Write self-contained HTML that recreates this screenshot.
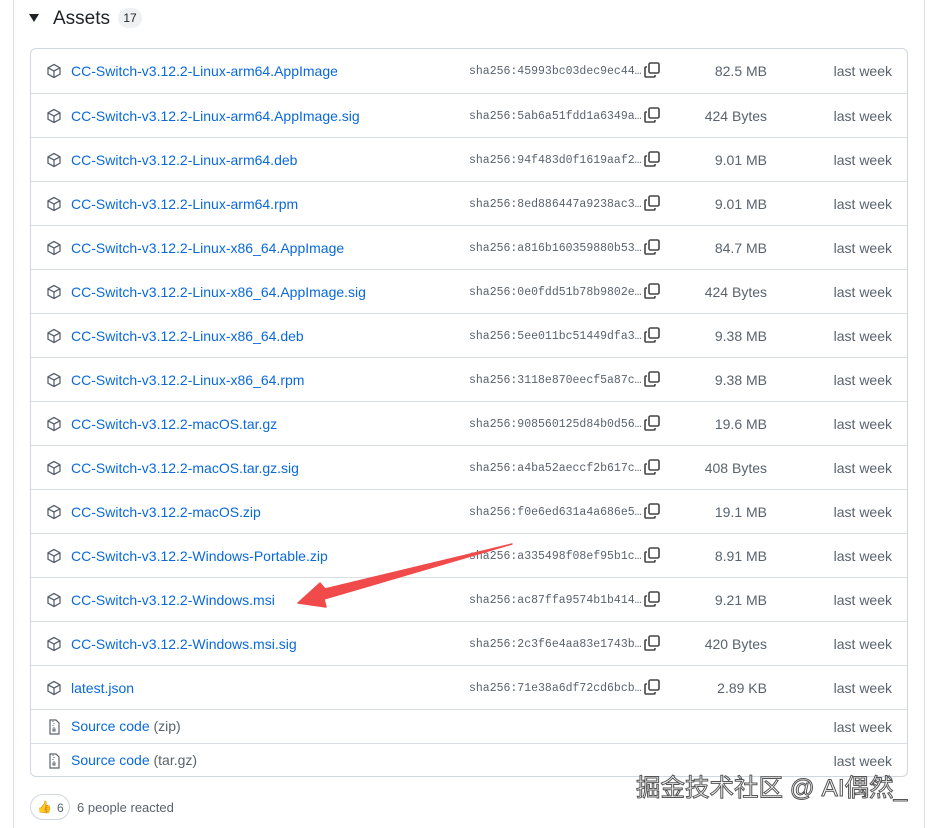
<!DOCTYPE html>
<html><head><meta charset="utf-8"><style>
body{margin:0;width:932px;height:823px;background:#fff;font-family:"Liberation Sans","Noto Sans CJK SC",sans-serif;position:relative;overflow:hidden}
.outer{position:absolute;left:13px;top:-2px;width:910px;height:830px;border-left:1px solid #d8dee4;border-right:1px solid #d8dee4}
.hdr{position:absolute;left:30px;top:8px;font-size:19px;color:#1f2328}
.tri{position:absolute;left:29px;top:14px;width:0;height:0;border-left:5px solid transparent;border-right:5px solid transparent;border-top:8px solid #1f2328}
.cnt{position:absolute;left:118px;top:8px;width:24px;height:20px;border-radius:10px;background:#eef0f2;font-size:12px;text-align:center;line-height:20px;color:#1f2328}
.list{position:absolute;left:30px;top:48px;width:876px;height:727px;border:1px solid #d0d7de;border-radius:6px}
.row{position:absolute;left:0;width:876px;border-top:1px solid #d8dee4;font-size:14px}
.row:first-child{border-top:none}
.ic{position:absolute;left:15px}
.name{position:absolute;left:40px;color:#0969da}
.sha{position:absolute;left:438px;font-family:"Liberation Mono",monospace;font-size:11.5px;color:#59636e}
.cp{position:absolute;left:612px}
.size{position:absolute;right:140px;color:#59636e}
.time{position:absolute;right:15px;color:#59636e}
.gray{color:#59636e}
.react{position:absolute;left:30px;top:794px;width:40px;height:26px;border:1px solid #d0d7de;border-radius:13px;font-size:12px;color:#59636e;box-sizing:border-box}
.wm{position:absolute;left:636px;top:769px;font-size:24.5px;color:#fff;-webkit-text-stroke:1px #555;white-space:nowrap}
</style></head><body>
<div class="outer"></div>
<div class="tri"></div>
<div class="hdr" style="left:53px">Assets</div>
<div class="cnt">17</div>
<div class="list" id="L"></div>
<div class="react"><span style="position:absolute;left:6px;top:5px">👍</span><span style="position:absolute;left:26px;top:6px">6</span></div>
<div style="position:absolute;left:77px;top:800px;font-size:13px;color:#59636e">6 people reacted</div>
<svg style="position:absolute;left:0;top:0" width="932" height="823"><path d="M512 544 L325 589 L320 583 L298 603 L326 607 L324 599 Z" fill="#f04a4a" stroke="#f04a4a" stroke-width="1.5" stroke-linejoin="round"/></svg>
<div class="wm">掘金技术社区 @ AI偶然_</div>
<script>
var d=[["CC-Switch-v3.12.2-Linux-arm64.AppImage","45993bc03dec9ec44","82.5 MB"],
["CC-Switch-v3.12.2-Linux-arm64.AppImage.sig","5ab6a51fdd1a6349a","424 Bytes"],
["CC-Switch-v3.12.2-Linux-arm64.deb","94f483d0f1619aaf2","9.01 MB"],
["CC-Switch-v3.12.2-Linux-arm64.rpm","8ed886447a9238ac3","9.01 MB"],
["CC-Switch-v3.12.2-Linux-x86_64.AppImage","a816b160359880b53","84.7 MB"],
["CC-Switch-v3.12.2-Linux-x86_64.AppImage.sig","0e0fdd51b78b9802e","424 Bytes"],
["CC-Switch-v3.12.2-Linux-x86_64.deb","5ee011bc51449dfa3","9.38 MB"],
["CC-Switch-v3.12.2-Linux-x86_64.rpm","3118e870eecf5a87c","9.38 MB"],
["CC-Switch-v3.12.2-macOS.tar.gz","908560125d84b0d56","19.6 MB"],
["CC-Switch-v3.12.2-macOS.tar.gz.sig","a4ba52aeccf2b617c","408 Bytes"],
["CC-Switch-v3.12.2-macOS.zip","f0e6ed631a4a686e5","19.1 MB"],
["CC-Switch-v3.12.2-Windows-Portable.zip","a335498f08ef95b1c","8.91 MB"],
["CC-Switch-v3.12.2-Windows.msi","ac87ffa9574b1b414","9.21 MB"],
["CC-Switch-v3.12.2-Windows.msi.sig","2c3f6e4aa83e1743b","420 Bytes"],
["latest.json","71e38a6df72cd6bcb","2.89 KB"]];
var box='<svg width="16" height="16" viewBox="0 0 16 16"><path d="M8 1.5 L14 4.8 V11.2 L8 14.5 L2 11.2 V4.8 Z M2 4.8 L8 8 L14 4.8 M8 8 V14.5" fill="none" stroke="#59636e" stroke-width="1.3" stroke-linejoin="round"/></svg>';
var cp='<svg width="18" height="18" viewBox="0 0 18 18"><rect x="6" y="2" width="10" height="10" rx="1.5" fill="none" stroke="#444" stroke-width="1.6"/><path d="M4 6 H3 Q2 6 2 7 V15 Q2 16 3 16 H11 Q12 16 12 15 V14" fill="none" stroke="#444" stroke-width="1.6"/></svg>';
var zip='<svg width="12" height="16" viewBox="0 0 12 16"><path d="M2 1 H8 L11 4 V15 H2 Z" fill="none" stroke="#59636e" stroke-width="1.2"/><path d="M5 2v1M6 4v1M5 6v1M6 8v1M5 10v2h2v-2z" stroke="#59636e" stroke-width="1" fill="none"/></svg>';
var h='';
d.forEach(function(r,i){var t=i*44;h+='<div class="row" style="top:'+t+'px;height:44px"><span class="ic" style="top:14px">'+box+'</span><span class="name" style="top:14px">'+r[0]+'</span><span class="sha" style="top:16px">sha256:'+r[1]+'…</span><span class="cp" style="top:12px">'+cp+'</span><span class="size" style="top:14px">'+r[2]+'</span><span class="time" style="top:14px">last week</span></div>';});
[["zip",660],["tar.gz",694]].forEach(function(s){h+='<div class="row" style="top:'+s[1]+'px;height:34px"><span class="ic" style="top:9px;left:17px">'+zip+'</span><span class="name" style="top:8px">Source code <span class="gray">('+s[0]+')</span></span><span class="time" style="top:9px">last week</span></div>';});
document.getElementById('L').innerHTML=h;
</script>
</body></html>
